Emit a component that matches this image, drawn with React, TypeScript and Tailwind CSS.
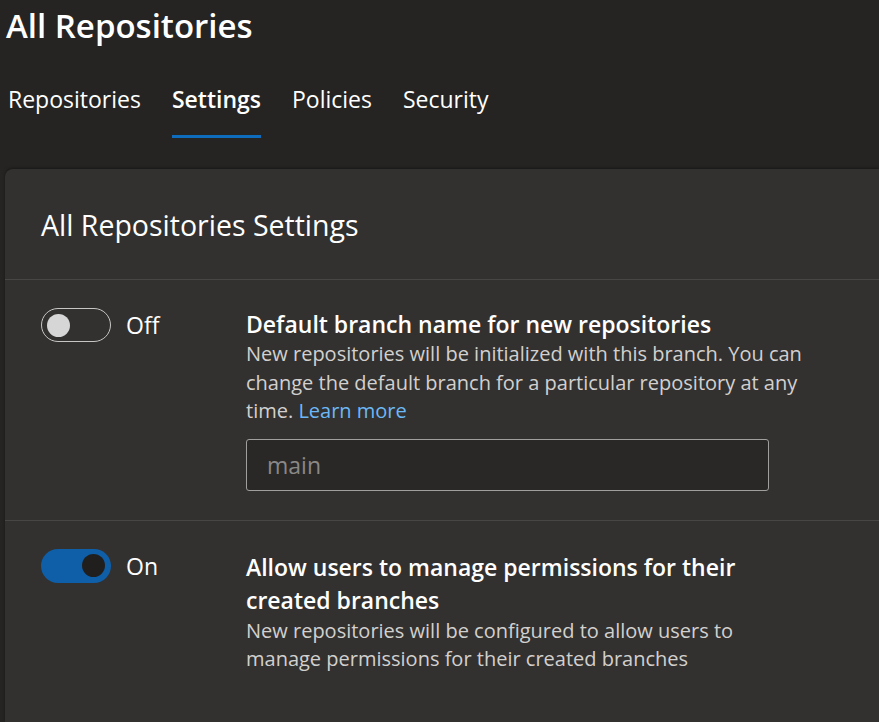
import React, { useState } from 'react';

const font = { fontFamily: '"Segoe UI", "Open Sans", "Noto Sans", sans-serif' };

const tabs = ['Repositories', 'Settings', 'Policies', 'Security'];

const Toggle = ({ on, onClick }: { on: boolean; onClick: () => void }) => (
    <button
        onClick={onClick}
        className={
            on
                ? 'flex h-[34px] w-[70px] items-center justify-end rounded-full bg-[#0f5fa8] px-[6px]'
                : 'flex h-[34px] w-[70px] items-center justify-start rounded-full border-[1.5px] border-[#c8c6c4] px-[5px]'
        }
    >
        <span className={on ? 'h-[23px] w-[23px] rounded-full bg-[#201f1e]' : 'h-[23px] w-[23px] rounded-full bg-[#d6d6d6]'} />
    </button>
);

const App = () => {
    const [branchOn, setBranchOn] = useState(false);
    const [permsOn, setPermsOn] = useState(true);

    return (
        <div className="flex min-h-screen flex-col overflow-hidden bg-[#252423] text-white" style={font}>
            <div className="px-[6px] pt-[4px]">
                <h1 className="text-[33px] font-semibold leading-[44px]">All Repositories</h1>
                <nav className="mt-[35px] flex gap-[31px] pl-[2px]">
                    {tabs.map((tab) => (
                        <div key={tab} className="flex flex-col">
                            <span className={tab === 'Settings' ? 'text-[23px] font-semibold leading-[32px]' : 'text-[23px] leading-[32px]'}>
                                {tab}
                            </span>
                            <span className={tab === 'Settings' ? 'mt-[20px] h-[3px] bg-[#0f6cbd]' : 'mt-[20px] h-[3px]'} />
                        </div>
                    ))}
                </nav>
            </div>

            <div className="ml-[5px] mt-[31px] flex-1 rounded-tl-lg bg-[#323130] shadow-[0_-1px_3px_rgba(0,0,0,0.35)]">
                <div className="flex h-[111px] items-center border-b border-[#484644] px-[36px]">
                    <h2 className="pt-[2px] text-[28.5px] leading-[40px]">All Repositories Settings</h2>
                </div>

                <div className="flex border-b border-[#484644] px-[36px] pb-[29px] pt-[28px]">
                    <div className="flex w-[205px] shrink-0 items-center gap-[15px] self-start">
                        <Toggle on={branchOn} onClick={() => setBranchOn(!branchOn)} />
                        <span className="text-[23px] leading-[34px]">{branchOn ? 'On' : 'Off'}</span>
                    </div>
                    <div className="w-[560px]">
                        <h3 className="text-[23px] font-semibold leading-[32px]">Default branch name for new repositories</h3>
                        <p className="text-[20px] leading-[28.5px] text-[#d2d0ce]">
                            New repositories will be initialized with this branch. You can change the default branch for a particular repository at any time.{' '}
                            <a href="#" className="whitespace-nowrap text-[#6cb8f6]">Learn more</a>
                        </p>
                        <input
                            placeholder="main"
                            className="mt-[13px] h-[52px] w-[523px] rounded-[3px] border border-[#a19f9d] bg-[#292827] px-[20px] text-[23px] text-white outline-none placeholder:text-[#8a8886]"
                        />
                    </div>
                </div>

                <div className="flex px-[36px] pb-[40px] pt-[28px]">
                    <div className="flex w-[205px] shrink-0 items-center gap-[15px] self-start">
                        <Toggle on={permsOn} onClick={() => setPermsOn(!permsOn)} />
                        <span className="text-[23px] leading-[34px]">{permsOn ? 'On' : 'Off'}</span>
                    </div>
                    <div className="w-[560px] pt-[2px]">
                        <h3 className="text-[23px] font-semibold leading-[33px]">Allow users to manage permissions for their created branches</h3>
                        <p className="text-[20px] leading-[28.5px] text-[#d2d0ce]">
                            New repositories will be configured to allow users to manage permissions for their created branches
                        </p>
                    </div>
                </div>
            </div>
        </div>
    );
};

export default App;
